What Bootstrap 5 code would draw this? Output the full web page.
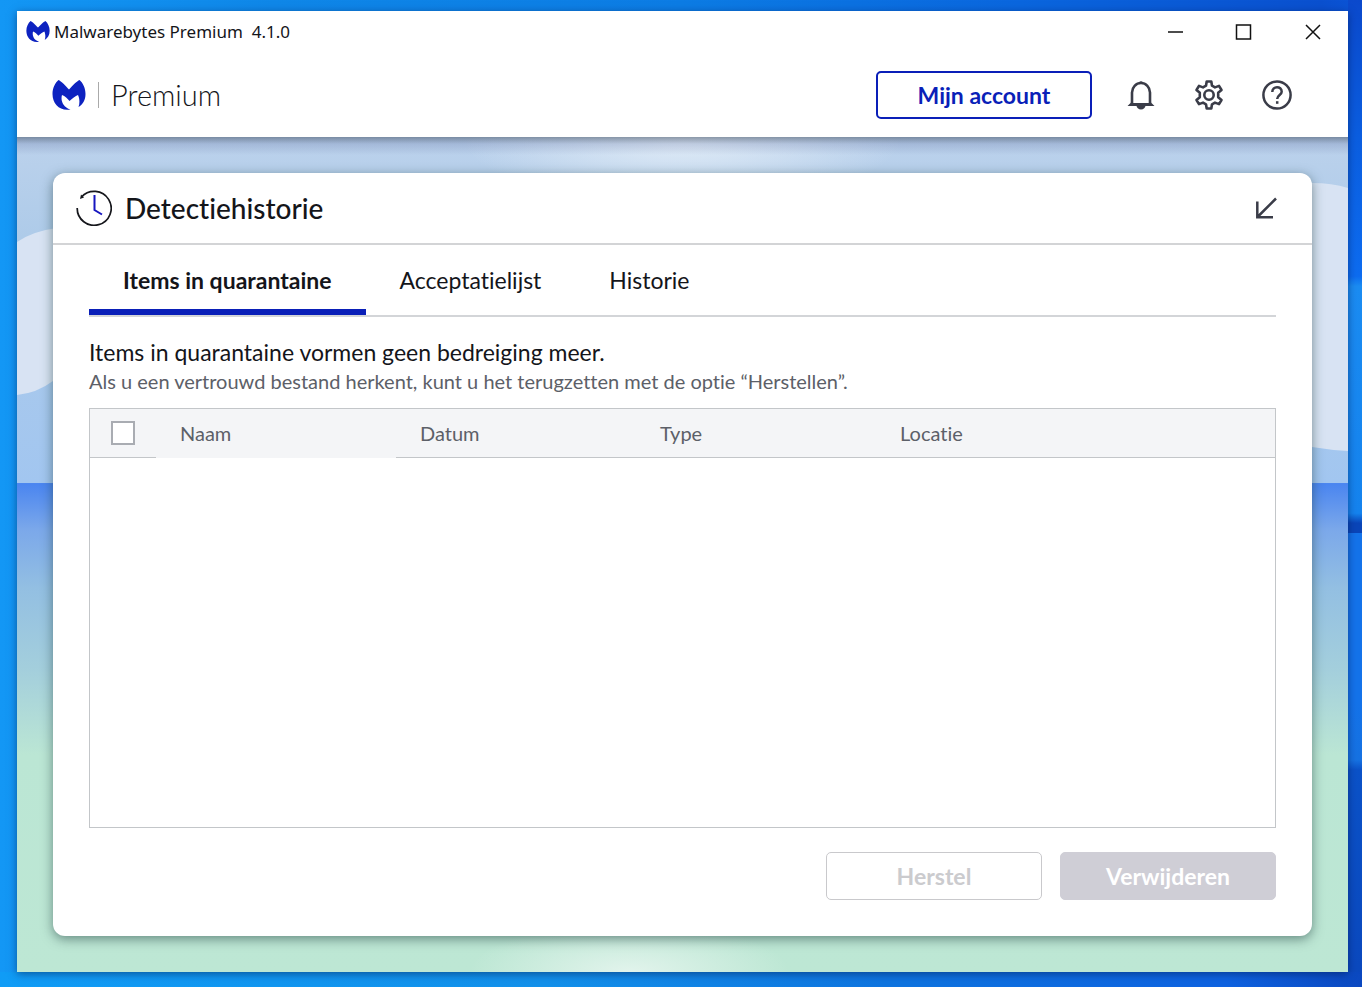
<!DOCTYPE html>
<html lang="nl">
<head>
<meta charset="utf-8">
<meta name="viewport" content="width=device-width, initial-scale=1">
<title>Malwarebytes Premium 4.1.0</title>
<link href="https://cdn.jsdelivr.net/npm/bootstrap@5.3.0/dist/css/bootstrap.min.css" rel="stylesheet">
<style>
:root { --brand: #0a1fb8; --ink: #14151a; --muted: #5c6068; }
body {
  font-family: Lato, "Open Sans", sans-serif; font-size: 20px; line-height: 28px; color: var(--ink);
  padding: 11px 14px 15px 17px; position: relative; isolation: isolate;
  background: linear-gradient(90deg, #1397f5 0%, #0f87e8 20%, #0c7ce4 50%, #0a66de 75%, #0a50cf 97%, #0b55d8 100%);
}
body, button { font-variant-ligatures: none; }
.desk-right, .desk-bottom { position: absolute; z-index: -1; right: 0; bottom: 0; }
.desk-right { top: 0; width: 14px; background: linear-gradient(#0b49cc 0%, #0b5ee0 14%, #0d6cf0 28%, #1b8cf2 29%, #1583ee 52%, #0a45b8 53%, #0a45b8 54%, #1473ea 54%, #1473ea 71%, #1672e2 77%, #0b52c8 78%, #0b48bd 100%); }
.desk-bottom { left: 0; height: 15px; background: linear-gradient(90deg, #109cf6 0%, #1290ea 40%, #0e74df 65%, #0e62e0 90%, #0b48c0 100%); }
.app-window { background: #fff; box-shadow: 0 2px 8px rgba(0, 20, 70, .5); }
.title-bar { height: 41px; padding: 0 21px 0 9px; font: 17px/24px "Noto Sans", "Open Sans", sans-serif; }
.window-controls { gap: 41px; }
.plain-button { border: 0; padding: 0; background: none; color: #3a3c48; display: block; line-height: 0; }
.app-header { height: 85px; padding: 0 55px 0 35px; }
.brand-divider { width: 1px; height: 26px; background: #aaa; margin: 0 12px; }
.brand-name { font-size: 29px; line-height: 36px; font-weight: 300; }
.header-icons { gap: 36px; margin-left: 33px; }
.action { width: 216px; height: 48px; padding: 0; border-radius: 5px; font-size: 23px; line-height: 28px; font-weight: 700; }
.btn-account { --bs-btn-color: var(--brand); --bs-btn-border-color: var(--brand); --bs-btn-hover-bg: #eef0ff; --bs-btn-hover-color: var(--brand); border-width: 2px; }
.btn-restore { --bs-btn-disabled-color: #cbcbce; --bs-btn-disabled-border-color: #c9c9cc; --bs-btn-disabled-opacity: 1; }
.btn-remove { --bs-btn-disabled-color: #fff; --bs-btn-disabled-bg: #cfced6; --bs-btn-disabled-border-color: #cfced6; --bs-btn-disabled-opacity: 1; }
.scene { padding: 36px; position: relative; isolation: isolate; overflow: hidden;
  background:
    linear-gradient(rgba(55, 70, 90, .5), rgba(70, 85, 140, .2) 7px, transparent 18px),
    radial-gradient(ellipse 220px 70px at 50% 0, rgba(235, 243, 250, .8), transparent),
    radial-gradient(ellipse 160px 50px at 46% 100%, rgba(235, 247, 242, .8), transparent),
    linear-gradient(#bcd2ec 0, #aecbe9 12%, #a2c6f0 41.4%, #4a85f0 41.5%, #7ba8ea 47%, #93bfe2 54%, #a4cfdc 64%, #bbe6d4 74%, #bde7d4 100%);
}
.cloud { position: absolute; z-index: -1; top: 0; width: 60px; height: 330px; fill: #d8e3f3; }
.history-card { border: 0; border-radius: 12px; box-shadow: 0 3px 12px rgba(30, 60, 60, .55); }
.history-head { height: 72px; padding: 0 34px 0 23px; border-bottom: 2px solid #d3d4d6; }
.history-head h1 { font-size: 28px; line-height: 36px; font-weight: 500; margin: 0 0 0 13px; }
.history-body { padding: 0 36px 36px; }
.tabs-row { --bs-nav-tabs-border-width: 0; height: 72px; border-bottom: 2px solid #d3d5d8; }
.tabs-row .nav-link { padding: 5px 34px 0; height: 70px; border-bottom: 6px solid transparent; color: var(--ink); font-size: 23px; line-height: 28px; border-radius: 0; }
.tabs-row .nav-link.active { font-weight: 700; color: var(--ink); border-bottom-color: var(--brand); }
.intro-line { font-size: 23px; line-height: 30px; margin: 20px 0 0; }
.hint-line { color: var(--muted); line-height: 28px; margin: 0 0 13px; }
.grid-box { border: 1px solid #c3c6c9; }
.grid-table { table-layout: fixed; }
.grid-table th { background: #f4f5f7; height: 48px; padding: 0 24px; color: var(--muted); font-weight: 400; font-size: 20px; border-bottom: 1px solid #c3c6c9; vertical-align: middle; }
.grid-table th.sorted { border-bottom-color: #f4f5f7; }
.col-check { width: 66px; } .col-std { width: 240px; }
.grid-table .form-check-input { width: 24px; height: 24px; margin: 0; border: 2px solid #a9acb2; border-radius: 0; display: block; }
.grid-table th.check-cell { padding: 0 0 0 21px; }
.actions-row { gap: 18px; margin-top: 24px; }
</style>
</head>
<body class="min-vh-100 d-flex flex-column">
<div class="desk-right"></div><div class="desk-bottom"></div>
<svg width="0" height="0" class="position-absolute" aria-hidden="true">
  <symbol id="logo" viewBox="0 0 34 32"><path fill="#0d22c0" d="M6.500 1C9 2 14 7 17 10.500C20 7 25 2 27.500 1C31 4 33.500 9 33.500 15C33.500 21 31 25.500 26.500 28C28 24 27.500 19 26 16C23.500 17 20 19.500 17.500 22C15.500 19.500 13 17 10 16C8.500 21 10.500 28 18.500 30.500C8 32.500 .5 25 .5 15C.5 9 3 4 6.500 1Z"/></symbol>
</svg>
<div class="app-window flex-grow-1 d-flex flex-column">
  <div class="title-bar d-flex align-items-center">
    <svg width="24" height="23" aria-hidden="true"><use href="#logo"/></svg>
    <span class="ms-1">Malwarebytes Premium&nbsp; 4.1.0</span>
    <div class="window-controls d-flex ms-auto">
      <button class="plain-button" type="button" aria-label="Minimaliseren"><svg width="28" height="28" stroke="#111" stroke-width="1.500"><path d="M7 14H22"/></svg></button>
      <button class="plain-button" type="button" aria-label="Maximaliseren"><svg width="28" height="28" fill="none" stroke="#111" stroke-width="1.500"><path d="M6.500 7H20.500V21H6.500Z"/></svg></button>
      <button class="plain-button" type="button" aria-label="Sluiten"><svg width="28" height="28" stroke="#111" stroke-width="1.500"><path d="M7 7 21 21M21 7 7 21"/></svg></button>
    </div>
  </div>
  <header class="app-header d-flex align-items-center">
    <svg width="34" height="32" aria-hidden="true"><use href="#logo"/></svg>
    <span class="brand-divider"></span>
    <span class="brand-name">Premium</span>
    <button class="btn action btn-account ms-auto" type="button">Mijn account</button>
    <div class="header-icons d-flex">
      <button class="plain-button" type="button" aria-label="Meldingen">
        <svg width="32" height="32" viewBox="0 0 32 32" fill="none" stroke="currentColor" stroke-width="2.600"><path d="M7 24V13.500A9 9.500 0 0 1 25 13.500V24"/><path d="M2.500 27 7 22.500V24H25V22.500L29.500 27Z" fill="currentColor" stroke="none"/><path d="M14 4.500A2 2.300 0 0 1 18 4.500ZM11.500 26.500H20.500A4.500 4 0 0 1 11.500 26.500Z" fill="currentColor" stroke="none"/></svg>
      </button>
      <button class="plain-button" type="button" aria-label="Instellingen">
        <svg width="32" height="32" viewBox="0 0 32 32" fill="none" stroke="currentColor" stroke-width="2.600" stroke-linejoin="round"><circle cx="16" cy="16" r="4.700"/><path d="M13.700 2.500H18.300L19 6.700L22 8.400L26 6.900L28.500 11L25.200 13.800V18.200L28.500 21L26 25.100L22 23.600L19 25.300L18.300 29.500H13.700L13 25.300L10 23.600L6 25.100L3.500 21L6.800 18.200V13.800L3.500 11L6 6.900L10 8.400L13 6.700Z"/></svg>
      </button>
      <button class="plain-button" type="button" aria-label="Help">
        <svg width="32" height="32" viewBox="0 0 32 32" fill="none" stroke="currentColor" stroke-width="2.500"><circle cx="16" cy="16" r="13.600"/><path d="M11.300 13C11.300 6.600 20.700 6.600 20.700 12.700C20.700 16 16.200 16 16.200 20"/><path d="M16.200 22.200V24.800"/></svg>
      </button>
    </div>
  </header>
  <main class="scene flex-grow-1 d-flex flex-column">
    <svg class="cloud start-0" aria-hidden="true"><path d="M0 105Q16 94 40 91L60 90V232L36 244Q20 256 0 258Z"/></svg>
    <svg class="cloud end-0" aria-hidden="true"><path d="M0 46H24Q44 46 60 51V314Q42 313 24 310H0Z"/></svg>
    <section class="card history-card flex-grow-1">
      <div class="history-head d-flex align-items-center">
        <svg width="36" height="36" viewBox="0 0 36 36" fill="none" aria-hidden="true"><path d="M1.200 18A17 17 0 1 0 5.500 7" stroke="#16171c" stroke-width="1.700"/><path d="M4 9 5 4.500 8 7.500Z" fill="#16171c"/><path d="M18.500 5V20L26 24.500" stroke="#1716c0" stroke-width="2"/></svg>
        <h1>Detectiehistorie</h1>
        <button class="plain-button ms-auto" type="button" aria-label="Inklappen"><svg width="24" height="24" viewBox="0 0 24 24" fill="none" stroke="currentColor" stroke-width="2.500"><path d="M22 2.500 3.500 21M3.300 5.500V21.200H19"/></svg></button>
      </div>
      <div class="history-body flex-grow-1 d-flex flex-column">
        <div class="nav nav-tabs tabs-row" role="tablist">
          <button class="nav-link active" type="button" role="tab" aria-selected="true">Items in quarantaine</button>
          <button class="nav-link" type="button" role="tab" aria-selected="false">Acceptatielijst</button>
          <button class="nav-link" type="button" role="tab" aria-selected="false">Historie</button>
        </div>
        <p class="intro-line">Items in quarantaine vormen geen bedreiging meer.</p>
        <p class="hint-line">Als u een vertrouwd bestand herkent, kunt u het terugzetten met de optie “Herstellen”.</p>
        <div class="grid-box flex-grow-1">
          <table class="grid-table w-100">
            <colgroup><col class="col-check"><col class="col-std"><col class="col-std"><col class="col-std"><col></colgroup>
            <thead><tr><th class="check-cell"><input class="form-check-input" type="checkbox" aria-label="Alles selecteren"></th><th class="sorted">Naam</th><th>Datum</th><th>Type</th><th>Locatie</th></tr></thead>
          </table>
        </div>
        <div class="actions-row d-flex justify-content-end">
          <button class="btn action btn-restore" type="button" disabled>Herstel</button>
          <button class="btn action btn-remove" type="button" disabled>Verwijderen</button>
        </div>
      </div>
    </section>
  </main>
</div>
<script src="https://cdn.jsdelivr.net/npm/bootstrap@5.3.0/dist/js/bootstrap.bundle.min.js"></script>
</body>
</html>
